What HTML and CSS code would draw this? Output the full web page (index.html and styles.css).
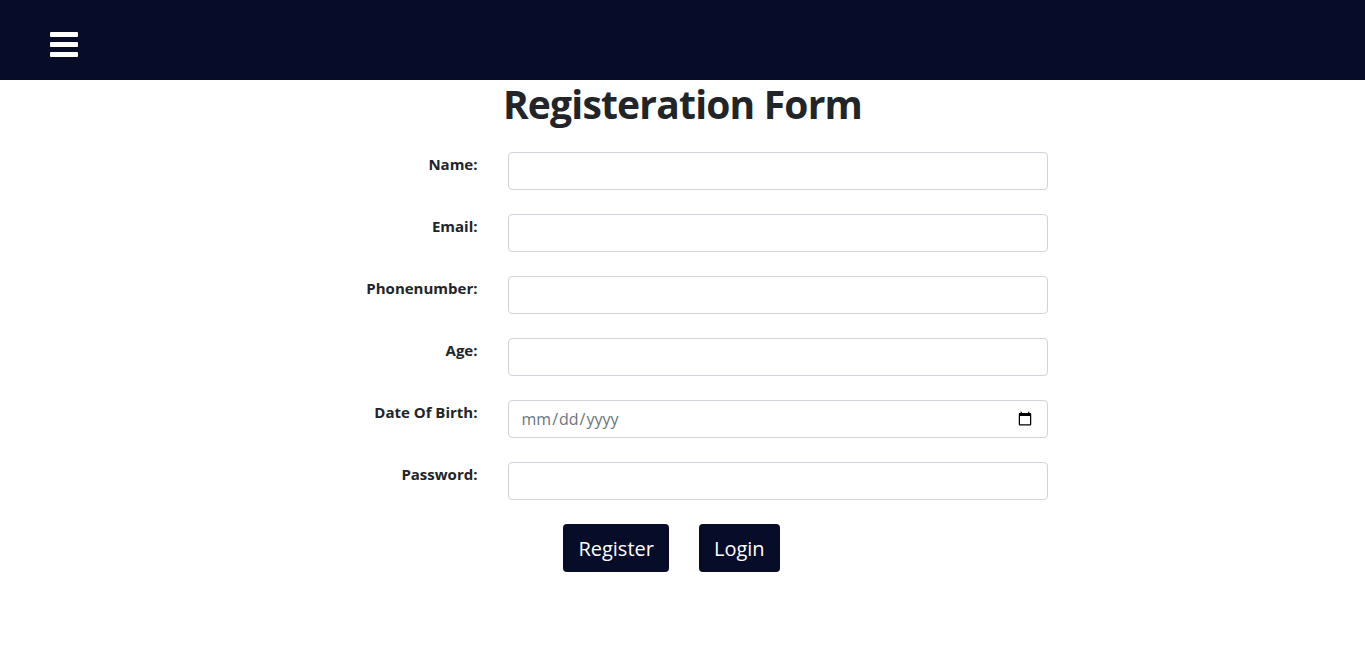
FILE: index.html
```html
<!DOCTYPE html>
<html lang="en">
<head>
<meta charset="utf-8">
<title>Registeration Form</title>
<link rel="stylesheet" href="styles.css">
</head>
<body>
<header class="topbar">
  <button class="menu-btn" aria-label="Menu">
    <span class="bar"></span><span class="bar"></span><span class="bar"></span>
  </button>
</header>
<main class="page">
  <h1 class="title">Registeration Form</h1>
  <form class="reg-form">
    <label class="lbl" for="name">Name:</label>
    <input class="field" id="name" type="text">
    <label class="lbl" for="email">Email:</label>
    <input class="field" id="email" type="email">
    <label class="lbl" for="phone">Phonenumber:</label>
    <input class="field" id="phone" type="text">
    <label class="lbl" for="age">Age:</label>
    <input class="field" id="age" type="text">
    <label class="lbl" for="dob">Date Of Birth:</label>
    <input class="field" id="dob" type="date">
    <label class="lbl" for="pw">Password:</label>
    <input class="field" id="pw" type="password">
    <div class="actions">
      <button type="button" class="btn">Register</button>
      <button type="button" class="btn">Login</button>
    </div>
  </form>
</main>
</body>
</html>
```
FILE: styles.css
```css
* { box-sizing: border-box; }
body {
  margin: 0;
  font-family: "Open Sans", "Noto Sans", sans-serif;
  color: #212529;
  background: #fff;
}
.topbar {
  height: 80px;
  background: #070c29;
  display: flex;
  align-items: flex-start;
  padding: 32px 0 0 50px;
}
.menu-btn {
  background: none;
  border: 0;
  padding: 0;
  width: 28px;
  display: flex;
  flex-direction: column;
  gap: 5px;
  cursor: pointer;
}
.bar {
  display: block;
  height: 5px;
  width: 28px;
  background: #fff;
  border-radius: 1px;
}
.page {
  display: flex;
  flex-direction: column;
  align-items: center;
}
.title {
  margin: 0 0 24px;
  font-size: 39px;
  letter-spacing: -0.8px;
  line-height: 48px;
  font-weight: 700;
  text-align: center;
}
.reg-form {
  display: grid;
  grid-template-columns: 160px 540px;
  column-gap: 30px;
  row-gap: 24px;
}
.lbl {
  text-align: right;
  font-size: 15px;
  font-weight: 700;
  padding-top: 2px;
  line-height: 20px;
}
.field {
  height: 38px;
  width: 540px;
  border: 1px solid #ced4da;
  border-radius: 4px;
  padding: 6px 12px;
  font-family: "Open Sans", sans-serif;
  font-size: 16px;
  color: #212529;
  background: #fff;
}
.field[type="date"] { color: #6c757d; }
.actions {
  grid-column: 1 / -1;
  display: flex;
  justify-content: center;
  gap: 30px;
  padding-right: 22px;
}
.btn {
  background: #070c29;
  color: #fff;
  border: 0;
  border-radius: 4px;
  height: 48px;
  padding: 0 15px;
  font-family: "Open Sans", sans-serif;
  font-size: 20px;
}
```
